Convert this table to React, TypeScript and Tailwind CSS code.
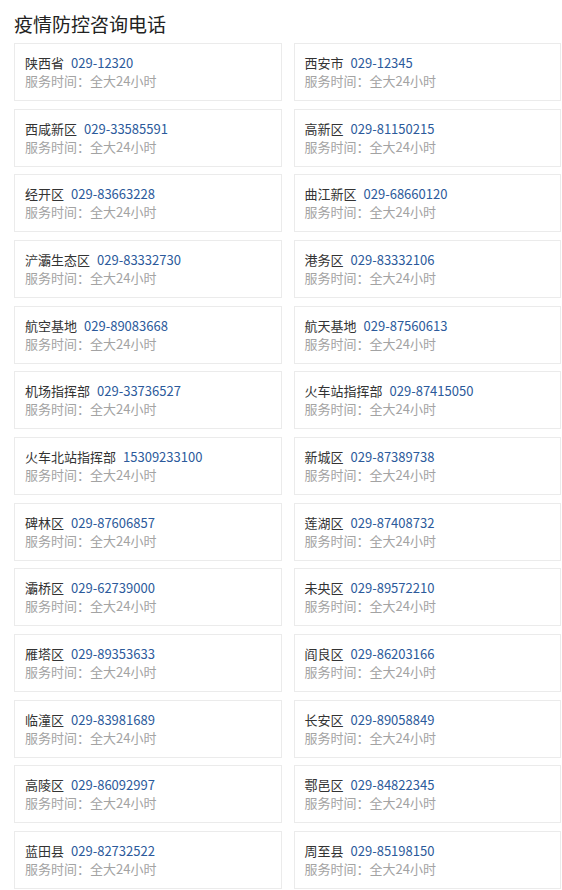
const hotlines: { name: string; phone: string }[] = [
  { name: '陕西省', phone: '029-12320' },
  { name: '西安市', phone: '029-12345' },
  { name: '西咸新区', phone: '029-33585591' },
  { name: '高新区', phone: '029-81150215' },
  { name: '经开区', phone: '029-83663228' },
  { name: '曲江新区', phone: '029-68660120' },
  { name: '浐灞生态区', phone: '029-83332730' },
  { name: '港务区', phone: '029-83332106' },
  { name: '航空基地', phone: '029-89083668' },
  { name: '航天基地', phone: '029-87560613' },
  { name: '机场指挥部', phone: '029-33736527' },
  { name: '火车站指挥部', phone: '029-87415050' },
  { name: '火车北站指挥部', phone: '15309233100' },
  { name: '新城区', phone: '029-87389738' },
  { name: '碑林区', phone: '029-87606857' },
  { name: '莲湖区', phone: '029-87408732' },
  { name: '灞桥区', phone: '029-62739000' },
  { name: '未央区', phone: '029-89572210' },
  { name: '雁塔区', phone: '029-89353633' },
  { name: '阎良区', phone: '029-86203166' },
  { name: '临潼区', phone: '029-83981689' },
  { name: '长安区', phone: '029-89058849' },
  { name: '高陵区', phone: '029-86092997' },
  { name: '鄠邑区', phone: '029-84822345' },
  { name: '蓝田县', phone: '029-82732522' },
  { name: '周至县', phone: '029-85198150' },
];

export default function App() {
  return (
    <div className="min-h-[890px] bg-white pl-[14px] pr-px font-['Noto_Sans_CJK_SC',sans-serif]">
      <h2 className="pt-[12px] pb-[8px] text-[19px] leading-[23px] font-normal text-[#222]">
        疫情防控咨询电话
      </h2>
      <div className="grid grid-cols-2 gap-x-[12px] gap-y-[7.67px]">
        {hotlines.map((item) => (
          <div
            key={item.name}
            className="h-[58px] border border-[#ebebeb] bg-white px-[10px] pt-[10px]"
          >
            <div className="text-[13px] leading-[18px] text-[#333]">
              {item.name}
              <span className="ml-[7px] text-[#2c5a9b]">{item.phone}</span>
            </div>
            <div className="text-[13px] leading-[18px] text-[#a3a3a3]">服务时间：全大24小时</div>
          </div>
        ))}
      </div>
    </div>
  );
}
